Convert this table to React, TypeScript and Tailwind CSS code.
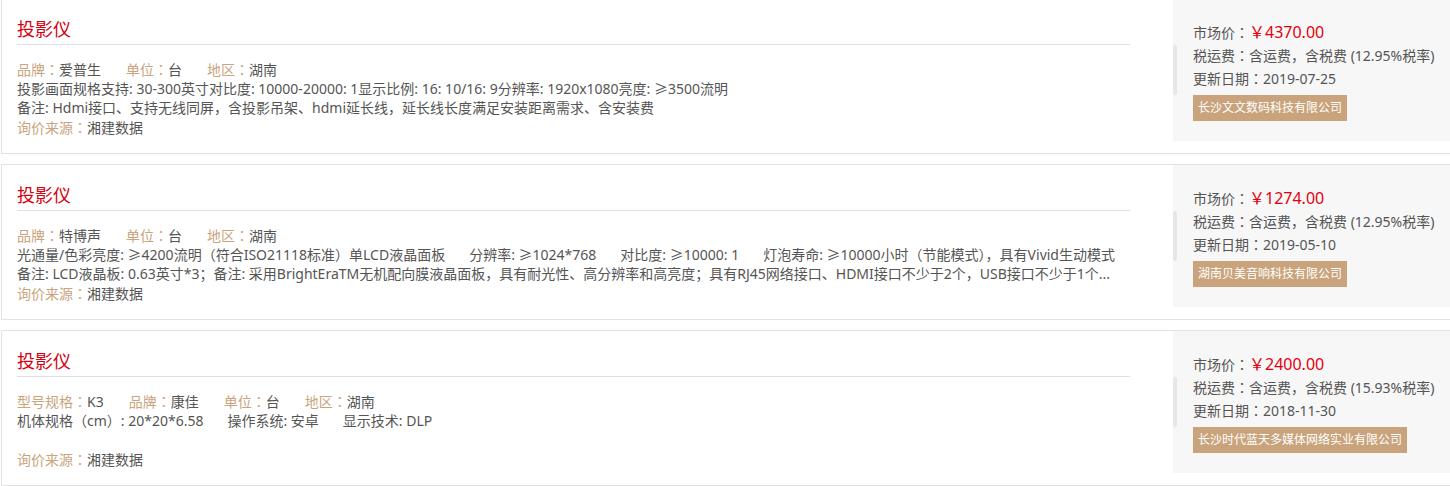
import React from "react";

type Field = { label: string; value: string };

type Quote = {
  title: string;
  fields: Field[];
  specs: string[];
  remark?: string;
  source: string;
  price: string;
  tax: string;
  date: string;
  company: string;
};

const quotes: Quote[] = [
  {
    title: "投影仪",
    fields: [
      { label: "品牌：", value: "爱普生" },
      { label: "单位：", value: "台" },
      { label: "地区：", value: "湖南" },
    ],
    specs: [
      "投影画面规格支持: 30-300英寸对比度: 10000-20000: 1显示比例: 16: 10/16: 9分辨率: 1920x1080亮度: ≥3500流明",
    ],
    remark: "备注: Hdmi接口、支持无线同屏，含投影吊架、hdmi延长线，延长线长度满足安装距离需求、含安装费",
    source: "湘建数据",
    price: "￥4370.00",
    tax: "含运费，含税费 (12.95%税率)",
    date: "2019-07-25",
    company: "长沙文文数码科技有限公司",
  },
  {
    title: "投影仪",
    fields: [
      { label: "品牌：", value: "特博声" },
      { label: "单位：", value: "台" },
      { label: "地区：", value: "湖南" },
    ],
    specs: [
      "光通量/色彩亮度: ≥4200流明（符合ISO21118标准）单LCD液晶面板",
      "分辨率: ≥1024*768",
      "对比度: ≥10000: 1",
      "灯泡寿命: ≥10000小时（节能模式），具有Vivid生动模式",
    ],
    remark:
      "备注: LCD液晶板: 0.63英寸*3；备注: 采用BrightEraTM无机配向膜液晶面板，具有耐光性、高分辨率和高亮度；具有RJ45网络接口、HDMI接口不少于2个，USB接口不少于1个...",
    source: "湘建数据",
    price: "￥1274.00",
    tax: "含运费，含税费 (12.95%税率)",
    date: "2019-05-10",
    company: "湖南贝美音响科技有限公司",
  },
  {
    title: "投影仪",
    fields: [
      { label: "型号规格：", value: "K3" },
      { label: "品牌：", value: "康佳" },
      { label: "单位：", value: "台" },
      { label: "地区：", value: "湖南" },
    ],
    specs: ["机体规格（cm）: 20*20*6.58", "操作系统: 安卓", "显示技术: DLP"],
    source: "湘建数据",
    price: "￥2400.00",
    tax: "含运费，含税费 (15.93%税率)",
    date: "2018-11-30",
    company: "长沙时代蓝天多媒体网络实业有限公司",
  },
];

// labels use the TC face so the full-width colon sits centred
const labelFont = "font-['Noto_Sans_CJK_TC',sans-serif]";

function QuoteCard({ quote }: { quote: Quote }) {
  return (
    <div className="ml-px mb-[10px] flex h-[156px] w-[1450px] border border-[#e2e2e2] bg-white">
      {/* LEFT: product info */}
      <div className="w-[1171px] shrink-0 pl-[15px] pr-[43px]">
        <div className="border-b border-[#e0e0e0] pt-[18px] pb-[3px] text-[18px] leading-[24px] text-[#d7000f]">
          {quote.title}
        </div>
        <div className="mt-[15px] text-[14px] leading-[19px] text-[#555]">
          <div className="flex">
            {quote.fields.map((f) => (
              <span key={f.label} className="mr-[25px]">
                <span className={`${labelFont} text-[#c9a47e]`}>{f.label}</span>
                {f.value}
              </span>
            ))}
          </div>
          <div className="flex whitespace-nowrap">
            {quote.specs.map((s) => (
              <span key={s} className="mr-[24px]">
                {s}
              </span>
            ))}
          </div>
          {quote.remark ? (
            <div className="overflow-hidden whitespace-nowrap">{quote.remark}</div>
          ) : (
            <div className="h-[19px]" />
          )}
          <div className="mt-px">
            <span className={`${labelFont} text-[#c9a47e]`}>询价来源：</span>
            {quote.source}
          </div>
        </div>
      </div>

      {/* RIGHT: price panel */}
      <div className="relative h-[142px] flex-1 bg-[#f7f7f7] pl-5 pt-[22px] text-[14px] leading-[23px] text-[#555]">
        <div className="absolute left-0 top-[46px] h-[50px] w-[4px] rounded-full bg-[#e6e6e6]" />
        <div>
          <span className={labelFont}>市场价：</span>
          <span className="text-[16px] text-[#e3000f]">{quote.price}</span>
        </div>
        <div className="whitespace-nowrap">
          <span className={labelFont}>税运费：</span>
          {quote.tax}
        </div>
        <div>
          <span className={labelFont}>更新日期：</span>
          {quote.date}
        </div>
        <div className="mt-[5px] inline-block bg-[#c9a37b] px-[5px] text-[12px] leading-[26px] text-white">
          {quote.company}
        </div>
      </div>
    </div>
  );
}

export default function App() {
  return (
    <div className="h-[486px] w-[1450px] overflow-hidden bg-white font-['Noto_Sans','Noto_Sans_CJK_SC',sans-serif]">
      <div className="-mt-[2px]">
        {quotes.map((q, i) => (
          <QuoteCard key={i} quote={q} />
        ))}
      </div>
    </div>
  );
}
